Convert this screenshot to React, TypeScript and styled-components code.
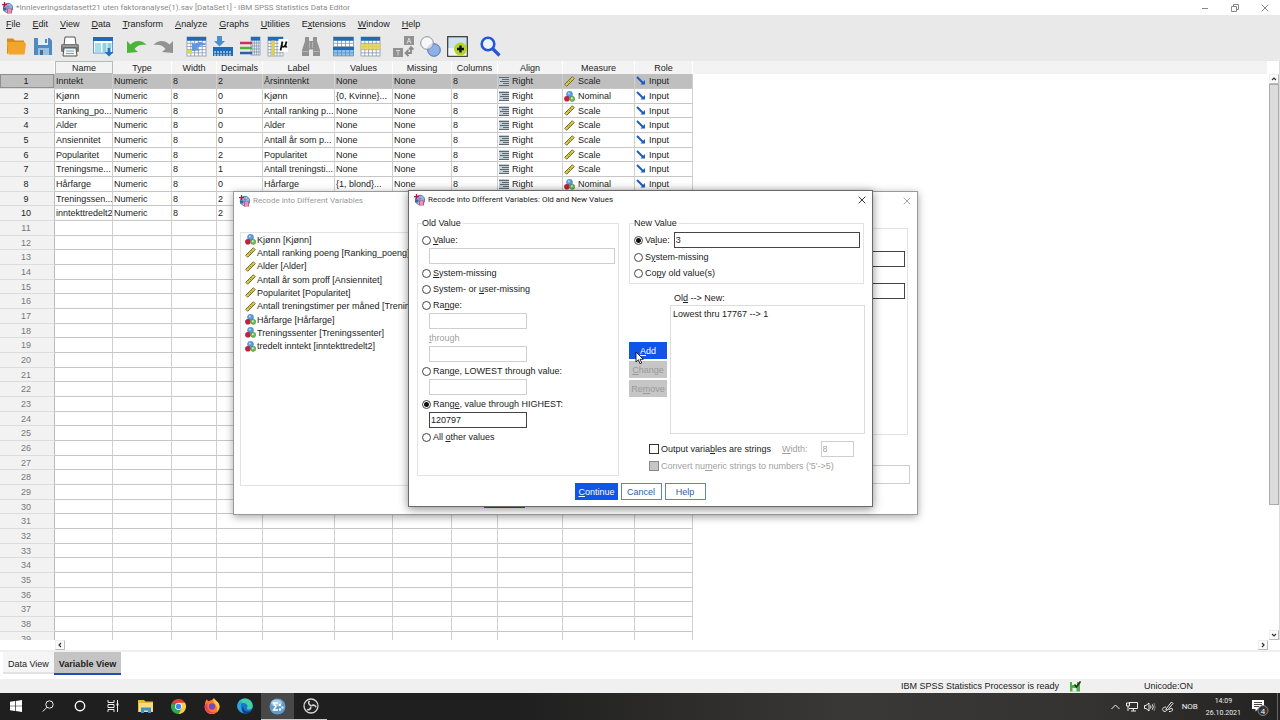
import React, { useState } from "react";
import styled, { createGlobalStyle, css } from "styled-components";

const ui = `"Liberation Sans", Arial, sans-serif`;
const windows = `Roboto, "Noto Sans", sans-serif`;

const GlobalStyle = createGlobalStyle`
  *, *::before, *::after { box-sizing: border-box; }
  body { margin: 0; background: #fff; font-family: ${ui}; font-size: 9px; line-height: 12px; color: #222; }
  button, input { font: inherit; color: inherit; margin: 0; padding: 0; border-radius: 0; }
  svg { display: block; flex: none; }
`;

/* ---------- text helper: "&" marks the underlined access key ---------- */

const Key = styled.u`
  text-underline-offset: 1px;
`;

function Mnemonic({ text }: { text: string }) {
  const i = text.indexOf("&");
  if (i < 0) return <span>{text}</span>;
  return (
    <span>
      {text.slice(0, i)}
      <Key>{text[i + 1]}</Key>
      {text.slice(i + 2)}
    </span>
  );
}

/* ---------- window frame ---------- */

const Page = styled.div`
  position: relative;
  display: flex;
  flex-direction: column;
  height: 100vh;
  overflow: hidden;
`;

const TitleBar = styled.header`
  display: flex;
  align-items: center;
  gap: 3px;
  height: 15px;
  padding: 0 10px 0 2px;
  background: #fff;
  color: #8a8a8a;
  font-family: ${windows};
  font-size: 8px;
`;

const TitleText = styled.span`
  flex: 1;
  white-space: nowrap;
`;

const WindowButtons = styled.div`
  display: flex;
  gap: 20px;
`;

const GlyphButton = styled.button`
  display: flex;
  align-items: center;
  justify-content: center;
  width: 10px;
  height: 10px;
  border: 0;
  background: none;
`;

const MenuBar = styled.nav`
  display: flex;
  align-items: center;
  gap: 12px;
  height: 17px;
  padding: 0 6px;
  background: #e9e9e9;
`;

const MenuItem = styled.button`
  border: 0;
  background: none;
  line-height: 12px;
`;

const ToolBar = styled.div`
  display: flex;
  align-items: center;
  gap: 12px;
  height: 29px;
  padding: 0 6px;
  background: #e9e9e9;
`;

const ToolGroup = styled.div`
  display: flex;
  gap: 6px;
`;

const ToolButton = styled.button`
  width: 21px;
  height: 21px;
  border: 0;
  background: none;
`;

/* ---------- variable grid ---------- */

const Workspace = styled.main`
  display: flex;
  flex: 1;
  min-height: 0;
`;

const GridPane = styled.div`
  flex: 1;
  min-width: 0;
  overflow: hidden;
`;

const VariableTable = styled.table`
  width: 100%;
  table-layout: fixed;
  border-collapse: separate;
  border-spacing: 0;
`;

const HeadCell = styled.th<{ $boxed?: boolean }>`
  height: 13px;
  padding: 0;
  overflow: hidden;
  background: #f3f3f3;
  border-right: 1px solid #fff;
  font-weight: 400;
  white-space: nowrap;
  ${(p) => p.$boxed && css`
    border: 1px solid #b4bcb8;
    line-height: 10px;
  `}
`;

const Row = styled.tr<{ $selected?: boolean }>`
  height: 15px;
  background: ${(p) => (p.$selected ? "#bfbfbf" : "#fff")};
  &:nth-child(3n) { height: 14px; }
`;

const RowHead = styled.th<{ $selected?: boolean; $unused?: boolean }>`
  padding: 0 2px 0 0;
  background: ${(p) => (p.$selected ? "#c0c0c0" : "#f2f2f2")};
  color: ${(p) => (p.$unused ? "#777" : "#222")};
  border-right: 1px solid #bbb;
  border-bottom: 1px solid #dcdcdc;
  box-shadow: ${(p) => (p.$selected ? "inset 0 0 0 1px #8f8f8f" : "none")};
  font-weight: 400;
  line-height: 12px;
`;

const Cell = styled.td`
  padding: 0 0 0 1px;
  overflow: hidden;
  border-right: 1px solid #cfcfcf;
  border-bottom: 1px solid #c6c6c6;
  line-height: 12px;
  white-space: nowrap;
`;

const Filler = styled.td`
  padding: 0;
  background: #fff;
`;

const IconText = styled.div`
  display: flex;
  align-items: center;
  gap: 3px;
  height: 12px;
  white-space: nowrap;
`;

const VerticalBar = styled.div`
  display: flex;
  flex-direction: column;
  width: 12px;
  padding-top: 13px;
  padding-left: 1px;
  border-right: 1px solid #ddd;
`;

const ArrowButton = styled.button`
  display: flex;
  align-items: center;
  justify-content: center;
  width: 10px;
  height: 10px;
  border: 1px solid #ddd;
  border-color: #eee #bbb #bbb #eee;
  background: #fafafa;
`;

const Thumb = styled.div`
  flex: 421;
  border: 1px solid #aaa;
  background: #dcdcdc;
`;

const Track = styled.div`
  flex: 125;
`;

const HorizontalBar = styled.div`
  display: flex;
  justify-content: space-between;
  height: 12px;
  padding: 0 12px 0 55px;
  border-bottom: 2px solid #efefef;
`;

const TabStrip = styled.div`
  display: flex;
  height: 27px;
  padding-left: 3px;
`;

const Tab = styled.button<{ $active?: boolean }>`
  height: 22px;
  padding: 3px 5px 0;
  border: 0;
  border-bottom: 2px solid #e2e2e2;
  background: #f5f5f5;
  ${(p) => p.$active && css`
    height: 23px;
    background: #c4c4c4;
    border-bottom-color: #1f4fb5;
    font-weight: 700;
  `}
`;

const StatusBar = styled.footer`
  display: flex;
  align-items: center;
  justify-content: flex-end;
  height: 14px;
  background: #f0f0f0;
`;

const StatusIcon = styled.span`
  width: 74px;
  margin-left: 11px;
`;

const UnicodeState = styled.span`
  width: 136px;
`;

/* ---------- dialogs ---------- */

const Dialog = styled.section<{ $x: number; $y: number; $w: number; $h: number; $front?: boolean }>`
  position: absolute;
  left: ${(p) => p.$x}px;
  top: ${(p) => p.$y}px;
  width: ${(p) => p.$w}px;
  height: ${(p) => p.$h}px;
  display: flex;
  flex-direction: column;
  border: 1px solid ${(p) => (p.$front ? "#6a6a6a" : "#999")};
  background: #fff;
  box-shadow: 0 2px ${(p) => (p.$front ? "9px rgba(0,0,0,.45)" : "8px rgba(0,0,0,.35)")};
`;

const DialogTitle = styled.header<{ $front?: boolean }>`
  display: flex;
  align-items: center;
  gap: 3px;
  height: 19px;
  padding: 0 5px 2px;
  color: ${(p) => (p.$front ? "#222" : "#999")};
  font-family: ${windows};
  font-size: 8px;
`;

const SourceBody = styled.div`
  display: flex;
  gap: 120px;
  flex: 1;
  padding: 17px 7px 0 6px;
`;

const SourceList = styled.ul`
  width: 200px;
  height: 254px;
  margin: 4px 0 0;
  padding: 0 4px;
  border: 1px solid #e2e2e2;
  list-style: none;
`;

const SourceItem = styled.li`
  display: flex;
  align-items: center;
  gap: 1px;
  height: 13px;
  white-space: nowrap;
  &:nth-child(3n) { height: 14px; }
`;

const OutputColumn = styled.div`
  display: flex;
  flex-direction: column;
  gap: 30px;
  flex: 1;
`;

const OutputGroup = styled.div`
  display: flex;
  flex-direction: column;
  gap: 16px;
  height: 207px;
  margin-right: 2px;
  padding: 22px 2px;
  border: 1px solid #e2e2e2;
`;

const RecodeBody = styled.div`
  display: flex;
  gap: 10px;
  padding: 7px 7px 0 8px;
`;

const Group = styled.fieldset<{ $w: number; $h: number }>`
  width: ${(p) => p.$w}px;
  height: ${(p) => p.$h}px;
  min-width: 0;
  margin: 0;
  padding: 3px 3px 0 4px;
  border: 1px solid #e2e2e2;
`;

const Legend = styled.legend`
  height: 12px;
  padding: 0 2px 0 0;
`;

const OptionLine = styled.div`
  display: flex;
  align-items: center;
  height: 16px;
`;

const OptionLabel = styled.label<{ $off?: boolean }>`
  display: flex;
  align-items: center;
  gap: 2px;
  height: 16px;
  white-space: nowrap;
  color: ${(p) => (p.$off ? "#a0a0a0" : "#222")};
`;

const Radio = styled.input`
  appearance: none;
  flex: none;
  width: 9px;
  height: 9px;
  border: 1px solid #444;
  border-radius: 50%;
  background: #fff;
  &:checked { background: radial-gradient(circle, #111 0 2px, #fff 3px); }
`;

const Check = styled.input`
  appearance: none;
  flex: none;
  width: 10px;
  height: 10px;
  border: 1px solid #333;
  background: #fff;
  &:disabled { background: #c6c6c6; border-color: #888; }
`;

const Field = styled.input<{ $tone?: "strong" | "soft" }>`
  display: block;
  width: 100%;
  height: 16px;
  padding: 0 1px;
  border: 1px solid ${(p) => (p.$tone === "strong" ? "#444" : "#cfcfcf")};
  background: #fff;
  outline: 0;
  &:disabled { color: #a0a0a0; }
`;

const ConditionField = styled(Field)`
  height: 19px;
`;

const Indented = styled.div<{ $short?: boolean }>`
  width: ${(p) => (p.$short ? "105px" : "auto")};
  margin-bottom: 1px;
  padding-left: 7px;
`;

const ThroughLabel = styled.label`
  display: block;
  height: 16px;
  padding-left: 7px;
  color: #a0a0a0;
  line-height: 16px;
`;

const ValueLine = styled(OptionLine)`
  gap: 4px;
  margin-bottom: 1px;
`;

const RightColumn = styled.div`
  flex: 1;
`;

const Mapping = styled.div`
  display: flex;
  gap: 3px;
  padding-top: 8px;
`;

const MappingButtons = styled.div`
  display: flex;
  flex-direction: column;
  gap: 2px;
  width: 38px;
  padding-top: 50px;
`;

const ActionButton = styled.button<{ $kind?: "primary" | "outline" }>`
  height: 17px;
  border: 1px solid #c6c6c6;
  background: #c6c6c6;
  color: #999;
  line-height: 12px;
  ${(p) => p.$kind === "primary" && css`
    border-color: #0f56e8;
    background: #0f56e8;
    color: #fff;
  `}
  ${(p) => p.$kind === "outline" && css`
    border-color: #5b86c0;
    background: #fff;
    color: #2a5caa;
  `}
`;

const MappingColumn = styled.div`
  flex: 1;
`;

const MappingTitle = styled.div`
  height: 13px;
  padding-left: 4px;
`;

const MappingList = styled.ul`
  height: 129px;
  margin: 0 0 7px;
  padding: 2px;
  border: 1px solid #dcdcdc;
  list-style: none;
`;

const StringOptions = styled.div`
  padding-left: 20px;
`;

const StringLine = styled.div`
  display: flex;
  align-items: center;
  gap: 11px;
  margin-bottom: 1px;
`;

const WidthLabel = styled(OptionLabel)`
  gap: 13px;
`;

const WidthField = styled(Field)`
  width: 33px;
`;

const ButtonRow = styled.div`
  display: flex;
  justify-content: center;
  gap: 3px;
  margin-top: 7px;
`;

const DialogButton = styled(ActionButton)`
  min-width: 41px;
  padding: 0 2px;
`;

const BackButtons = styled(ButtonRow)`
  position: absolute;
  left: 250px;
  bottom: 6px;
`;

const Pointer = styled.svg`
  position: absolute;
  left: 635px;
  top: 351px;
`;

/* ---------- taskbar ---------- */

const TaskBar = styled.footer`
  display: flex;
  justify-content: space-between;
  height: 27px;
  background: linear-gradient(90deg, #1f1f1f 0 40%, #3a3836 66%, #353331 85%, #242322);
  color: #eee;
`;

const TaskGroup = styled.div`
  display: flex;
`;

const TaskButton = styled.button<{ $system?: boolean; $active?: boolean; $running?: boolean }>`
  display: flex;
  align-items: center;
  justify-content: center;
  width: ${(p) => (p.$system ? 32 : 33)}px;
  height: 27px;
  border: 0;
  border-bottom: 1px solid ${(p) => (p.$active || p.$running ? "#c9c9c9" : "transparent")};
  background: ${(p) => (p.$active ? "#484848" : "transparent")};
`;

const Tray = styled.div`
  display: flex;
  align-items: center;
  gap: 6px;
`;

const Clock = styled.div`
  margin: 0 4px 0 2px;
  font-family: ${windows};
  font-size: 7px;
  text-align: center;
`;

const Language = styled.span`
  margin-left: 2px;
  font-family: ${windows};
  font-size: 8px;
`;

const ShowDesktop = styled.div`
  width: 3px;
  height: 27px;
  margin-left: 2px;
  border-left: 1px solid #666;
`;

/* ---------- icons ---------- */

const SpssIcon = () => (
  <svg width="11" height="12" viewBox="0 0 11 12">
    <circle cx="6" cy="6" r="4.7" fill="#b8cdea" stroke="#4a78b4" />
    <path d="M6 1.500v9M2 6h8.500M3 3.800q3 1.400 6.500 0" stroke="#4a78b4" strokeWidth=".7" fill="none" />
    <path d="M0 2.600h5M2.500 0v5" stroke="#b31942" strokeWidth="1.300" />
    <path d="M5 6.500h5v5H5z" fill="#cf4f83" />
    <path d="M6 8h3M6 10h3" stroke="#fff" strokeWidth=".8" />
    <path d="M1 5.500h3.500v3H1z" fill="#3566a8" />
  </svg>
);

const Grid = ({ x = 1, y = 1, w = 18, h = 18 }: { x?: number; y?: number; w?: number; h?: number }) => {
  const v = [1, 2, 3, 4].map((i) => `M${x + (w * i) / 5} ${y}v${h}`).join("");
  const r = [1, 2, 3, 4, 5].map((i) => `M${x} ${y + (h * i) / 6}h${w}`).join("");
  return (
    <>
      <rect x={x} y={y} width={w} height={h} fill="#fff" stroke="#8297ad" strokeWidth=".8" />
      <path d={v + r} stroke="#8297ad" strokeWidth=".8" />
      <rect x={x} y={y} width={w} height={h / 6 + 0.5} fill="#1d6cb8" />
    </>
  );
};

const toolIcons: Record<string, React.ReactNode> = {
  Open: (
    <>
      <path d="M1 18V2.500h6l2 2h9V8H5.500L1.500 18z" fill="#d98a17" />
      <path d="M1 6h17.500l1.500 2-1.500 10.500H2.500z" fill="#f2a52c" />
    </>
  ),
  Save: (
    <>
      <path d="M1 2h15.500L19 4.500V19H1z" fill="#5189c0" />
      <path d="M5 2h10v7H5z" fill="#e4eef8" />
      <path d="M12 3h2v4h-2z" fill="#5189c0" />
      <path d="M5 12h11v7H5z" fill="#9cc1e0" />
      <path d="M7 14h3v5H7z" fill="#3c709f" />
    </>
  ),
  Print: (
    <>
      <path d="M5 1h10l1 8H4z" fill="#fff" stroke="#555" />
      <rect x="1" y="8" width="18" height="8" rx="1.500" fill="#777" />
      <path d="M2.500 10h15" stroke="#bbb" />
      <path d="M4 12h12l1 8H3z" fill="#f4f4f4" stroke="#555" />
      <path d="M6 15h8M6 17.500h8" stroke="#7aa4cc" />
    </>
  ),
  "Recall dialog": (
    <>
      <rect x=".5" y="2" width="19" height="15" fill="#fff" stroke="#5f9ad0" />
      <path d="M0 1h20v4H0z" fill="#1d6cb8" />
      <path d="M2 7h6v9H2z" fill="#a9dcec" />
      <path d="M9.500 7h4v9h-4zM14.500 7h4v5h-4z" fill="#8fd0e4" />
      <path d="M14.500 12h3v4h3L16 20.500 11.500 16h3z" fill="#1d74c8" />
    </>
  ),
  Undo: <path d="M1 5v12l11-1-3.500-3c2.500-3.500 6.500-5 12-4-4-5-11-5.500-16-.5z" fill="#4bb53a" />,
  Redo: <path d="M20 5v12L9 16l3.500-3C10 9.500 6 8 .5 9c4-5 11-5.500 16-.5z" fill="#929292" />,
  "Go to case": (
    <>
      <Grid x={1} y={1} w={19} h={19} />
      <path d="M1 14h5v3.500H1z" fill="#d8d45a" />
      <path d="M6 6v9l8-.5-2.700-2.500c2-2.500 4.700-3.500 8.700-3-3.500-4-8-4-11.500-.5z" fill="#5f98dc" />
    </>
  ),
  "Go to variable": (
    <>
      <path d="M4 0h5v5h3l-5.500 5.500L1 5h3z" fill="#4a90cf" />
      <path d="M0 11h20v9H0z" fill="#1d6cb8" />
      <path d="M2 15v5M5 15v5M8 15v5M11 15v5M14 15v5M17 15v5" stroke="#fff" />
      <path d="M0 17.500h20" stroke="#1d6cb8" strokeWidth=".8" />
    </>
  ),
  Variables: (
    <>
      <Grid x={11} y={1} w={9} h={18} />
      <path d="M0 7h12" stroke="#cf2f5f" strokeWidth="2.500" />
      <path d="M0 12h12" stroke="#4bb53a" strokeWidth="2.500" />
      <path d="M0 17h12" stroke="#2d5fb0" strokeWidth="2.500" />
    </>
  ),
  "Descriptive statistics": (
    <>
      <Grid x={1} y={1} w={15} h={19} />
      <path d="M4.500 4.500h3v15.500h-3z" fill="#e2cf4c" />
      <path d="M11.500 3h9.500v13h-9.500z" fill="#fff" />
      <path d="M15.500 5.500l-2 9M15 10q1.500 2 3.500-1l1-3.500M18.500 9q-.3 2.500 1.500 1.500" stroke="#111" strokeWidth="1.800" fill="none" />
    </>
  ),
  Find: (
    <>
      <path d="M5 1h4v4h4V1h4v4l3 9v6h-7v-6.500H9V20H2v-6l3-9z" fill="#929292" />
      <path d="M9.500 6v6M12.500 6v6M2.500 15.500h6M13.500 15.500h6" stroke="#b5b5b5" />
    </>
  ),
  "Split file": (
    <>
      <Grid x={0.5} y={1} w={20} h={19} />
      <path d="M0 11h21v3H0z" fill="#1d6cb8" />
      <path d="M0 14h21v6H0z" fill="#3d8ed6" opacity=".55" />
    </>
  ),
  "Select cases": (
    <>
      <Grid x={1} y={1} w={19} h={19} />
      <path d="M1 8h19v5.500H1z" fill="#ecd04c" opacity=".85" />
    </>
  ),
  "Value labels": (
    <>
      <path d="M11 0h10v9H11zM0 12h10v9H0z" fill="#929292" />
      <path d="M14 7.500l2-5.500 2 5.500M14.700 5.500h2.600M3 14.500h4M5 14.500v5" stroke="#d8d8d8" fill="none" />
      <path d="M18 11v6h-5M15.500 14l-3 3 3 3M16 13.500l2-2.500 2.500 2.500" stroke="#8a8a8a" strokeWidth="1.800" fill="none" />
    </>
  ),
  "Use variable sets": (
    <>
      <circle cx="14" cy="14" r="6.300" fill="#8fb0e4" stroke="#4a72b8" />
      <circle cx="7" cy="7" r="6.300" fill="#fff" fillOpacity=".65" stroke="#8a90a0" />
    </>
  ),
  "Custom dialogs": (
    <>
      <rect x=".7" y=".7" width="19.600" height="19.600" fill="#cfe0f0" stroke="#333" strokeWidth="1.200" />
      <path d="M1.500 12h18v7.500h-18z" fill="#f3f3f3" />
      <circle cx="13.500" cy="13" r="6.500" fill="#b2d622" />
      <path d="M13.500 9.500v7M10 13h7" stroke="#111" strokeWidth="2.400" />
    </>
  ),
  Search: (
    <>
      <circle cx="8" cy="8" r="6.300" fill="#eef3fb" stroke="#2457d6" strokeWidth="2.600" />
      <path d="M12.500 12.500l7 7" stroke="#2457d6" strokeWidth="3.200" />
    </>
  ),
};

const ToolIcon = ({ name }: { name: string }) => (
  <svg width="21" height="21" viewBox="0 0 21 21" fill="none">
    {toolIcons[name]}
  </svg>
);

const RightAlignIcon = () => (
  <svg width="10" height="10" viewBox="0 0 10 10">
    <path d="M0 0h10v10H0z" fill="#c3cdd4" />
    <path d="M0 1.500h10M3 3.500h7M1 5.500h9M4 7.500h6M0 9.500h10" stroke="#5b6771" strokeWidth="1" />
  </svg>
);

const ScaleIcon = () => (
  <svg width="11" height="11" viewBox="0 0 11 11">
    <path d="M.7 8.300L8.300.7l2 2-7.600 7.600z" fill="#dccb4c" stroke="#6b6427" strokeWidth=".9" />
    <path d="M3.500 6.500l1 1M5 5l1 1M6.500 3.500l1 1" stroke="#6b6427" strokeWidth=".7" />
  </svg>
);

const NominalIcon = () => (
  <svg width="11" height="11" viewBox="0 0 11 11">
    <circle cx="5.500" cy="3.300" r="3" fill="#5b9be0" stroke="#3f74b5" strokeWidth=".5" />
    <circle cx="2.900" cy="7.700" r="2.800" fill="#c2213c" />
    <circle cx="8.200" cy="7.800" r="2.600" fill="#6cbf5c" stroke="#3a7d35" strokeWidth=".5" />
    <circle cx="4.800" cy="2.500" r="1" fill="#b9dbff" />
    <circle cx="7.800" cy="7.200" r="1" fill="#c9f0c0" />
  </svg>
);

const InputRoleIcon = () => (
  <svg width="10" height="10" viewBox="0 0 10 10">
    <path d="M1 1l6 6" stroke="#1a5cc8" strokeWidth="2" />
    <path d="M9 8.500H4.500L9 4z" fill="#1a5cc8" />
  </svg>
);

const CloseIcon = ({ color }: { color: string }) => (
  <svg width="8" height="8" viewBox="0 0 8 8">
    <path d="M.7.7l6.600 6.600M7.300.7L.7 7.300" stroke={color} strokeWidth=".9" />
  </svg>
);

const Chevron = ({ turn }: { turn: number }) => (
  <svg width="6" height="6" viewBox="0 0 6 6">
    <path d="M1 4l2-2 2 2" transform={`rotate(${turn} 3 3)`} stroke="#333" strokeWidth="1.200" fill="none" />
  </svg>
);

const measureIcon = { Scale: <ScaleIcon />, Nominal: <NominalIcon /> };

/* ---------- data ---------- */

type Measure = "Scale" | "Nominal";
type Variable = [name: string, width: number, decimals: number, label: string, values: string, measure: Measure];

const variables: Variable[] = [
  ["Inntekt", 8, 2, "Årsinntenkt", "None", "Scale"],
  ["Kjønn", 8, 0, "Kjønn", "{0, Kvinne}...", "Nominal"],
  ["Ranking_po...", 8, 0, "Antall ranking p...", "None", "Scale"],
  ["Alder", 8, 0, "Alder", "None", "Scale"],
  ["Ansiennitet", 8, 0, "Antall år som p...", "None", "Scale"],
  ["Popularitet", 8, 2, "Popularitet", "None", "Scale"],
  ["Treningsme...", 8, 1, "Antall treningsti...", "None", "Scale"],
  ["Hårfarge", 8, 0, "Hårfarge", "{1, blond}...", "Nominal"],
  ["Treningssen...", 8, 2, "", "", "Nominal"],
  ["inntekttredelt2", 8, 2, "", "", "Nominal"],
];

const columns: [string, number][] = [
  ["Name", 58], ["Type", 59], ["Width", 45], ["Decimals", 46], ["Label", 72], ["Values", 58],
  ["Missing", 59], ["Columns", 46], ["Align", 65], ["Measure", 72], ["Role", 58],
];

const menus = ["&File", "&Edit", "&View", "&Data", "&Transform", "&Analyze", "&Graphs", "&Utilities", "E&xtensions", "&Window", "&Help"];

const tools = [
  ["Open", "Save", "Print"],
  ["Recall dialog"],
  ["Undo", "Redo"],
  ["Go to case", "Go to variable", "Variables", "Descriptive statistics"],
  ["Find"],
  ["Split file", "Select cases"],
  ["Value labels", "Use variable sets", "Custom dialogs"],
  ["Search"],
];

const sources: [Measure, string][] = [
  ["Nominal", "Kjønn [Kjønn]"],
  ["Scale", "Antall ranking poeng [Ranking_poeng]"],
  ["Scale", "Alder [Alder]"],
  ["Scale", "Antall år som proff [Ansiennitet]"],
  ["Scale", "Popularitet [Popularitet]"],
  ["Scale", "Antall treningstimer per måned [Trening"],
  ["Nominal", "Hårfarge [Hårfarge]"],
  ["Nominal", "Treningssenter [Treningssenter]"],
  ["Nominal", "tredelt inntekt [inntekttredelt2]"],
];

/* ---------- parts ---------- */

function VariableCells({ v }: { v: Variable }) {
  const [name, width, decimals, label, values, measure] = v;
  return (
    <>
      <Cell>{name}</Cell>
      <Cell>Numeric</Cell>
      <Cell>{width}</Cell>
      <Cell>{decimals}</Cell>
      {label ? (
        <>
          <Cell>{label}</Cell>
          <Cell>{values}</Cell>
          <Cell>None</Cell>
          <Cell>8</Cell>
          <Cell><IconText><RightAlignIcon />Right</IconText></Cell>
          <Cell><IconText>{measureIcon[measure]}{measure}</IconText></Cell>
          <Cell><IconText><InputRoleIcon />Input</IconText></Cell>
        </>
      ) : (
        columns.slice(4).map(([column]) => <Cell key={column} />)
      )}
    </>
  );
}

function VariableGrid() {
  return (
    <VariableTable>
      <colgroup>
        <col style={{ width: 55 }} />
        {columns.map(([name, width]) => (
          <col key={name} style={{ width }} />
        ))}
        <col />
      </colgroup>
      <thead>
        <tr>
          <HeadCell />
          {columns.map(([name]) => (
            <HeadCell key={name} $boxed={name === "Name"}>{name}</HeadCell>
          ))}
          <HeadCell />
        </tr>
      </thead>
      <tbody>
        {Array.from({ length: 39 }, (_, i) => {
          const v = variables[i];
          return (
            <Row key={i} $selected={i === 0}>
              <RowHead scope="row" $selected={i === 0} $unused={!v}>{i + 1}</RowHead>
              {v ? <VariableCells v={v} /> : columns.map(([name]) => <Cell key={name} />)}
              <Filler />
            </Row>
          );
        })}
      </tbody>
    </VariableTable>
  );
}

function SourceDialog() {
  return (
    <Dialog $x={233} $y={191} $w={685} $h={324} aria-label="Recode into Different Variables">
      <DialogTitle>
        <SpssIcon />
        <TitleText>Recode into Different Variables</TitleText>
        <GlyphButton aria-label="Close"><CloseIcon color="#999" /></GlyphButton>
      </DialogTitle>
      <SourceBody>
        <SourceList>
          {sources.map(([measure, text]) => (
            <SourceItem key={text}>{measureIcon[measure]}{text}</SourceItem>
          ))}
        </SourceList>
        <OutputColumn>
          <OutputGroup>
            <Field $tone="strong" aria-label="Name" />
            <Field $tone="strong" aria-label="Label" />
          </OutputGroup>
          <ConditionField aria-label="Condition" />
        </OutputColumn>
      </SourceBody>
      <BackButtons>
        <DialogButton $kind="primary" aria-label="OK" />
      </BackButtons>
    </Dialog>
  );
}

function RadioOption({ group, text, value, onPick }: { group: string; text: string; value: string; onPick: (t: string) => void }) {
  return (
    <OptionLabel>
      <Radio type="radio" name={group} checked={value === text} onChange={() => onPick(text)} />
      <Mnemonic text={text} />
    </OptionLabel>
  );
}

function RecodeDialog() {
  const [oldKind, setOldKind] = useState("Rang&e, value through HIGHEST:");
  const [newKind, setNewKind] = useState("Va&lue:");
  const old = { group: "old", value: oldKind, onPick: setOldKind };
  const fresh = { group: "new", value: newKind, onPick: setNewKind };
  return (
    <Dialog $front $x={408} $y={190} $w={465} $h={317} aria-label="Old and New Values">
      <DialogTitle $front>
        <SpssIcon />
        <TitleText>Recode into Different Variables: Old and New Values</TitleText>
        <GlyphButton aria-label="Close"><CloseIcon color="#222" /></GlyphButton>
      </DialogTitle>
      <RecodeBody>
        <Group $w={202} $h={259}>
          <Legend>Old Value</Legend>
          <RadioOption {...old} text="&Value:" />
          <Indented><Field aria-label="Old value" /></Indented>
          <RadioOption {...old} text="&System-missing" />
          <RadioOption {...old} text="System- or &user-missing" />
          <RadioOption {...old} text="Ra&nge:" />
          <Indented $short><Field aria-label="Range from" /></Indented>
          <ThroughLabel htmlFor="through"><Mnemonic text="&through" /></ThroughLabel>
          <Indented $short><Field id="through" /></Indented>
          <RadioOption {...old} text="Ran&ge, LOWEST through value:" />
          <Indented $short><Field aria-label="Upper limit" /></Indented>
          <RadioOption {...old} text="Rang&e, value through HIGHEST:" />
          <Indented $short><Field $tone="strong" aria-label="Lower limit" defaultValue="120797" /></Indented>
          <RadioOption {...old} text="All &other values" />
        </Group>
        <RightColumn>
          <Group $w={235} $h={67}>
            <Legend>New Value</Legend>
            <ValueLine>
              <RadioOption {...fresh} text="Va&lue:" />
              <Field $tone="strong" aria-label="New value" defaultValue="3" autoFocus />
            </ValueLine>
            <RadioOption {...fresh} text="S&ystem-missing" />
            <RadioOption {...fresh} text="Co&py old value(s)" />
          </Group>
          <Mapping>
            <MappingButtons>
              <ActionButton $kind="primary"><Mnemonic text="&Add" /></ActionButton>
              <ActionButton disabled><Mnemonic text="&Change" /></ActionButton>
              <ActionButton disabled><Mnemonic text="Re&move" /></ActionButton>
            </MappingButtons>
            <MappingColumn>
              <MappingTitle><Mnemonic text="Ol&d --> New:" /></MappingTitle>
              <MappingList><li>{"Lowest thru 17767 --> 1"}</li></MappingList>
            </MappingColumn>
          </Mapping>
          <StringOptions>
            <StringLine>
              <OptionLabel><Check type="checkbox" /><Mnemonic text="Output varia&bles are strings" /></OptionLabel>
              <WidthLabel $off><Mnemonic text="&Width:" /><WidthField disabled defaultValue="8" /></WidthLabel>
            </StringLine>
            <OptionLabel $off><Check type="checkbox" disabled /><Mnemonic text="Convert nu&meric strings to numbers ('5'->5)" /></OptionLabel>
          </StringOptions>
        </RightColumn>
      </RecodeBody>
      <ButtonRow>
        <DialogButton $kind="primary"><Mnemonic text="&Continue" /></DialogButton>
        <DialogButton $kind="outline">Cancel</DialogButton>
        <DialogButton $kind="outline">Help</DialogButton>
      </ButtonRow>
    </Dialog>
  );
}

function Taskbar() {
  return (
    <TaskBar>
      <TaskGroup>
        <TaskButton $system aria-label="Start">
          <svg width="12" height="12" viewBox="0 0 12 12"><path d="M0 1.700l5-.7v4.700H0zM5.700.9L12 0v5.700H5.700zM0 6.300h5V11l-5-.7zM5.700 6.300H12V12l-6.300-.9z" fill="#fff" /></svg>
        </TaskButton>
        <TaskButton $system aria-label="Search">
          <svg width="12" height="12" viewBox="0 0 12 12" fill="none" stroke="#eee"><circle cx="7.500" cy="4.500" r="3.700" /><path d="M5 7.200L.8 11.500" /></svg>
        </TaskButton>
        <TaskButton $system aria-label="Cortana">
          <svg width="12" height="12" viewBox="0 0 12 12"><circle cx="6" cy="6" r="4.700" fill="none" stroke="#fff" strokeWidth="1.400" /></svg>
        </TaskButton>
        <TaskButton aria-label="Task view">
          <svg width="12" height="12" viewBox="0 0 12 12" fill="none" stroke="#eee"><path d="M1 0v2.500h6V0M1 12V9.500h6V12M1 4.500h6v3H1zM10.500 0v12" /><path d="M9.500 3.500h2v2h-2z" fill="#eee" stroke="none" /></svg>
        </TaskButton>
        <TaskButton aria-label="File Explorer">
          <svg width="16" height="13" viewBox="0 0 16 13"><path d="M0 0h6l1.500 1.500H15V12H0z" fill="#e9b73c" /><path d="M1 3h14v9H1z" fill="#fbdc77" /><path d="M3 13V7.500h10V13h-3v-2.500H6V13z" fill="#3d92d0" /></svg>
        </TaskButton>
        <TaskButton aria-label="Chrome">
          <svg width="15" height="15" viewBox="0 0 16 16"><path d="M8 8L1.070 4A8 8 0 0 1 14.930 4z" fill="#db4437" /><path d="M8 8L8 4H14.930A8 8 0 0 1 8 16z" fill="#ffcd40" /><path d="M8 8l3.500 2L8 16A8 8 0 0 1 1.070 4z" fill="#2da94f" /><circle cx="8" cy="8" r="3.700" fill="#fff" /><circle cx="8" cy="8" r="2.900" fill="#4285f4" /></svg>
        </TaskButton>
        <TaskButton aria-label="Firefox">
          <svg width="16" height="16" viewBox="0 0 16 16"><path d="M1 6c0-2 1-4 2-5 0 1.500 1 2 2 2.200C6 2 8 2.500 9 1c.3-.5.500-.8 1-1 0 2 5.500 3.500 5.500 8.500A7.500 7.500 0 0 1 .5 9z" fill="#ff7a2a" /><path d="M10 0c0 2 5.500 3.500 5.500 8.500 0 2-1 4-2.500 5.500 1-4-.5-7-3-9-1-1.500-1-3.500 0-5z" fill="#ffcb3c" /><path d="M.7 8.500a7.500 7.500 0 0 0 12 5.500c-4 1.500-8-.5-9-4.500-.5-2 0-3-.5-4.500-1.500 1-2.300 2-2.500 3.500z" fill="#ef3f5c" /><circle cx="8" cy="8.500" r="3.200" fill="#7a46c8" /></svg>
        </TaskButton>
        <TaskButton aria-label="Edge">
          <svg width="16" height="16" viewBox="0 0 16 16"><circle cx="8" cy="8" r="7.800" fill="#1577c9" /><path d="M.3 7A7.800 7.800 0 0 1 15.800 8c0 2.500-2 3.500-4 3.500-2.500 0-2-1.500-1.500-2.500.6-2-1-4-4-4S1 6 .3 7z" fill="#46cfa4" /><path d="M.3 7.500C1 4 3.500 3 6 3.300 3 5.500 3.500 11 6 14.500c-3-.5-6-3-5.700-7z" fill="#2ea3dc" /><path d="M6.500 8c-1 3 1.500 6 5 5.500 1.200-.2 2.300-.8 3-1.200-1 2-3.500 3.500-6.500 3.500-3-1.800-4-5.800-1.500-7.800z" fill="#123f7c" /></svg>
        </TaskButton>
        <TaskButton $active aria-label="SPSS Statistics">
          <svg width="17" height="17" viewBox="0 0 17 17"><circle cx="8.500" cy="8.500" r="8" fill="#5f9bcb" /><ellipse cx="7.500" cy="5" rx="5.500" ry="3.500" fill="#a8cde8" /><path d="M9 5H4.500L7 8.500 4.500 12H9" stroke="#fff" strokeWidth="1.400" fill="none" /><circle cx="11" cy="7" r="1.200" fill="#fff" /><circle cx="13.500" cy="9.500" r="1.200" fill="#dcecf8" /><circle cx="11" cy="11.500" r="1.200" fill="#fff" /></svg>
        </TaskButton>
        <TaskButton $running aria-label="OBS Studio">
          <svg width="16" height="16" viewBox="0 0 16 16" fill="none" stroke="#d5d5d5"><circle cx="8" cy="8" r="7" fill="#222" strokeWidth="1.300" /><path d="M8 7.500C5.500 7 5 4.500 6.500 3M8.300 8c2-1.600 4.200-.7 4.700 1.300M7.700 8.500c.3 2.500-1.700 3.800-3.700 3" strokeWidth="1.600" /></svg>
        </TaskButton>
      </TaskGroup>
      <Tray>
        <svg width="9" height="6" viewBox="0 0 9 6"><path d="M.5 5l4-4 4 4" stroke="#eee" fill="none" /></svg>
        <svg width="12" height="11" viewBox="0 0 12 11" fill="none" stroke="#eee"><path d="M3 1.500h8.500v6H3M5 10h5M7.300 7.500V10M.5 2h3v3h-3zM2 5v5" /></svg>
        <svg width="12" height="10" viewBox="0 0 12 10" fill="none" stroke="#eee"><path d="M.5 3.500H2L5 1v8L2 6.500H.5zM6.500 3.500q1 1.500 0 3M8.300 2.300q2 2.700 0 5.400" /><path d="M10 1q2.300 4 0 8" stroke="#888" /></svg>
        <svg width="12" height="12" viewBox="0 0 12 12" fill="none" stroke="#eee"><path d="M4 8l5.500-7 1.500 1.500L5.500 9H4zM4 6C1 6 0 8 1 9.500c1 1.500 3 1 3.500 0M7 10.500c1.500.5 4-.5 3.500-2.500-.5-1.500-3-.5-3.500 1" /></svg>
        <Language>NOB</Language>
        <Clock>14:09<br />26.10.2021</Clock>
        <svg width="18" height="18" viewBox="0 0 18 18"><path d="M1 2h12v9H7l-2.500 2.500V11H1z" fill="#fff" /><path d="M3 4.500h8M3 6.500h8M3 8.500h5" stroke="#333" strokeWidth=".9" /><circle cx="12" cy="12.500" r="5" fill="#333" stroke="#999" strokeWidth=".8" /><text x="12" y="15.500" fill="#fff" fontSize="8" textAnchor="middle">4</text></svg>
        <ShowDesktop />
      </Tray>
    </TaskBar>
  );
}

export default function App() {
  return (
    <Page>
      <GlobalStyle />
      <TitleBar>
        <SpssIcon />
        <TitleText>*Innleveringsdatasett21 uten faktoranalyse(1).sav [DataSet1] - IBM SPSS Statistics Data Editor</TitleText>
        <WindowButtons>
          <GlyphButton aria-label="Minimize"><svg width="8" height="8" viewBox="0 0 8 8"><path d="M1 4.500h6" stroke="#888" /></svg></GlyphButton>
          <GlyphButton aria-label="Restore"><svg width="8" height="8" viewBox="0 0 8 8"><path d="M.5 2.500h5v5h-5zM2.500 2.500v-2h5v5h-2" stroke="#888" fill="none" /></svg></GlyphButton>
          <GlyphButton aria-label="Close"><CloseIcon color="#777" /></GlyphButton>
        </WindowButtons>
      </TitleBar>
      <MenuBar>
        {menus.map((m) => (
          <MenuItem key={m}><Mnemonic text={m} /></MenuItem>
        ))}
      </MenuBar>
      <ToolBar>
        {tools.map((group) => (
          <ToolGroup key={group[0]}>
            {group.map((name) => (
              <ToolButton key={name} aria-label={name}><ToolIcon name={name} /></ToolButton>
            ))}
          </ToolGroup>
        ))}
      </ToolBar>
      <Workspace>
        <GridPane><VariableGrid /></GridPane>
        <VerticalBar>
          <ArrowButton aria-label="Scroll up"><Chevron turn={0} /></ArrowButton>
          <Thumb />
          <Track />
          <ArrowButton aria-label="Scroll down"><Chevron turn={180} /></ArrowButton>
        </VerticalBar>
      </Workspace>
      <HorizontalBar>
        <ArrowButton aria-label="Scroll left"><Chevron turn={270} /></ArrowButton>
        <ArrowButton aria-label="Scroll right"><Chevron turn={90} /></ArrowButton>
      </HorizontalBar>
      <TabStrip>
        <Tab>Data View</Tab>
        <Tab $active>Variable View</Tab>
      </TabStrip>
      <StatusBar>
        <span>IBM SPSS Statistics Processor is ready</span>
        <StatusIcon>
          <svg width="11" height="11" viewBox="0 0 11 11"><path d="M0 1h10v9.500H0z" fill="#4fae4a" /><path d="M2 1h5v3H2zM2.500 7h4v3.500h-4z" fill="#e8f5e6" /><path d="M4.500 3.500L6.500 6l4-5.500" stroke="#1c3d1a" strokeWidth="1.600" fill="none" /></svg>
        </StatusIcon>
        <UnicodeState>Unicode:ON</UnicodeState>
      </StatusBar>
      <Taskbar />
      <SourceDialog />
      <RecodeDialog />
      <Pointer width="9" height="14" viewBox="0 0 9 14">
        <path d="M1 1v10l2.400-2.200L5 12.700l1.700-.8-1.600-3.600h3.200z" fill="#fff" stroke="#111" strokeWidth=".9" />
      </Pointer>
    </Page>
  );
}
